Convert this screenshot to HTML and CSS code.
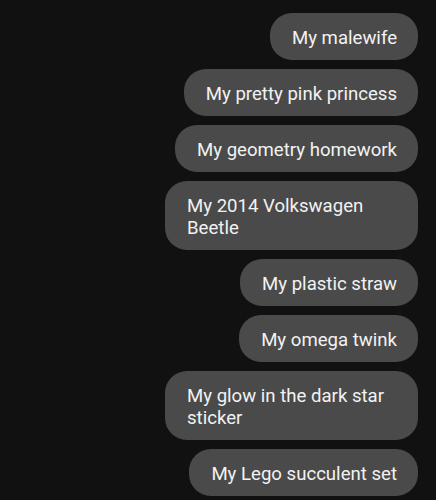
FILE: index.html
```html
<!DOCTYPE html>
<html lang="en">
<head>
<meta charset="utf-8">
<link rel="stylesheet" href="styles.css">
</head>
<body>
  <div class="thread">
    <div class="bubble">My malewife</div>
    <div class="bubble">My pretty pink princess</div>
    <div class="bubble">My geometry homework</div>
    <div class="bubble">My 2014 Volkswagen Beetle</div>
    <div class="bubble">My plastic straw</div>
    <div class="bubble">My omega twink</div>
    <div class="bubble">My glow in the dark star sticker</div>
    <div class="bubble">My Lego succulent set</div>
  </div>
</body>
</html>
```
FILE: styles.css
```css
html, body {
  margin: 0;
  background: #111111;
}

.thread {
  display: flex;
  flex-direction: column;
  align-items: flex-end;
  gap: 9px;
  padding: 13px 18px 0 0;
}

.bubble {
  box-sizing: border-box;
  max-width: 253px;
  background: #4a4a4a;
  color: #f2f2f2;
  font-family: Roboto, "Noto Sans", sans-serif;
  font-size: 18.6px;
  line-height: 22px;
  padding: 13.5px 21px 11.5px 22px;
  border-radius: 22px;
}
```
